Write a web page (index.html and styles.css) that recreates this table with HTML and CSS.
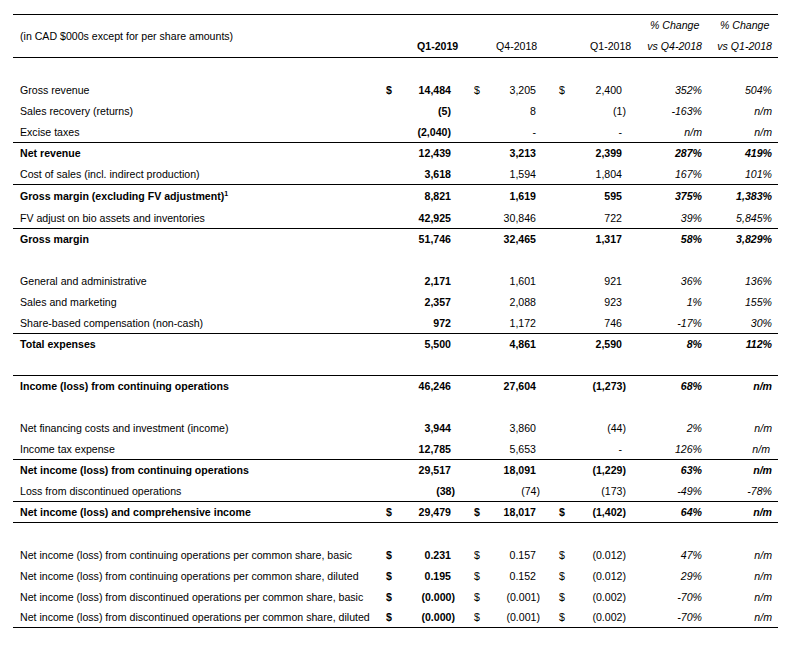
FILE: index.html
```html
<!DOCTYPE html>
<html>
<head>
<meta charset="utf-8">
<link rel="stylesheet" href="styles.css">
</head>
<body>
<div class="sheet">
  <div class="head">
    <div class="h-label">(in CAD $000s except for per share amounts)</div>
    <div class="h-q b">Q1-2019</div>
    <div class="h-q">Q4-2018</div>
    <div class="h-q">Q1-2018</div>
    <div class="h-p p1"><span>% Change<br>vs Q4-2018</span></div>
    <div class="h-p p2"><span>% Change<br>vs Q1-2018</span></div>
  </div>

  <div class="row"></div>
  <div class="row"><div class="lbl">Gross revenue</div><div class="d b">$</div><div class="v b">14,484</div><div class="d">$</div><div class="v">3,205</div><div class="d">$</div><div class="v">2,400</div><div class="p">352%</div><div class="p">504%</div></div>
  <div class="row"><div class="lbl">Sales recovery (returns)</div><div class="d"></div><div class="v b">(5)</div><div class="d"></div><div class="v">8</div><div class="d"></div><div class="v neg">(1)</div><div class="p">-163%</div><div class="p">n/m</div></div>
  <div class="row"><div class="lbl">Excise taxes</div><div class="d"></div><div class="v b">(2,040)</div><div class="d"></div><div class="v">-</div><div class="d"></div><div class="v">-</div><div class="p">n/m</div><div class="p">n/m</div></div>
  <div class="row total rule"><div class="lbl">Net revenue</div><div class="d"></div><div class="v">12,439</div><div class="d"></div><div class="v">3,213</div><div class="d"></div><div class="v">2,399</div><div class="p">287%</div><div class="p">419%</div></div>
  <div class="row"><div class="lbl">Cost of sales (incl. indirect production)</div><div class="d"></div><div class="v b">3,618</div><div class="d"></div><div class="v">1,594</div><div class="d"></div><div class="v">1,804</div><div class="p">167%</div><div class="p">101%</div></div>
  <div class="row total rule tall"><div class="lbl">Gross margin (excluding FV adjustment)<sup>1</sup></div><div class="d"></div><div class="v">8,821</div><div class="d"></div><div class="v">1,619</div><div class="d"></div><div class="v">595</div><div class="p">375%</div><div class="p">1,383%</div></div>
  <div class="row"><div class="lbl">FV adjust on bio assets and inventories</div><div class="d"></div><div class="v b">42,925</div><div class="d"></div><div class="v">30,846</div><div class="d"></div><div class="v">722</div><div class="p">39%</div><div class="p">5,845%</div></div>
  <div class="row total rule"><div class="lbl">Gross margin</div><div class="d"></div><div class="v">51,746</div><div class="d"></div><div class="v">32,465</div><div class="d"></div><div class="v">1,317</div><div class="p">58%</div><div class="p">3,829%</div></div>

  <div class="row"></div>
  <div class="row"><div class="lbl">General and administrative</div><div class="d"></div><div class="v b">2,171</div><div class="d"></div><div class="v">1,601</div><div class="d"></div><div class="v">921</div><div class="p">36%</div><div class="p">136%</div></div>
  <div class="row"><div class="lbl">Sales and marketing</div><div class="d"></div><div class="v b">2,357</div><div class="d"></div><div class="v">2,088</div><div class="d"></div><div class="v">923</div><div class="p">1%</div><div class="p">155%</div></div>
  <div class="row"><div class="lbl">Share-based compensation (non-cash)</div><div class="d"></div><div class="v b">972</div><div class="d"></div><div class="v">1,172</div><div class="d"></div><div class="v">746</div><div class="p">-17%</div><div class="p">30%</div></div>
  <div class="row total rule"><div class="lbl">Total expenses</div><div class="d"></div><div class="v">5,500</div><div class="d"></div><div class="v">4,861</div><div class="d"></div><div class="v">2,590</div><div class="p">8%</div><div class="p">112%</div></div>

  <div class="row"></div>
  <div class="row total rule"><div class="lbl">Income (loss) from continuing operations</div><div class="d"></div><div class="v">46,246</div><div class="d"></div><div class="v">27,604</div><div class="d"></div><div class="v neg">(1,273)</div><div class="p">68%</div><div class="p">n/m</div></div>

  <div class="row"></div>
  <div class="row"><div class="lbl">Net financing costs and investment (income)</div><div class="d"></div><div class="v b">3,944</div><div class="d"></div><div class="v">3,860</div><div class="d"></div><div class="v neg">(44)</div><div class="p">2%</div><div class="p">n/m</div></div>
  <div class="row"><div class="lbl">Income tax expense</div><div class="d"></div><div class="v b">12,785</div><div class="d"></div><div class="v">5,653</div><div class="d"></div><div class="v">-</div><div class="p">126%</div><div class="p inset">n/m</div></div>
  <div class="row total rule"><div class="lbl">Net income (loss) from continuing operations</div><div class="d"></div><div class="v">29,517</div><div class="d"></div><div class="v">18,091</div><div class="d"></div><div class="v neg">(1,229)</div><div class="p">63%</div><div class="p">n/m</div></div>
  <div class="row"><div class="lbl">Loss from discontinued operations</div><div class="d"></div><div class="v b neg">(38)</div><div class="d"></div><div class="v neg">(74)</div><div class="d"></div><div class="v neg">(173)</div><div class="p">-49%</div><div class="p">-78%</div></div>
  <div class="row total rule end boxed"><div class="lbl">Net income (loss) and comprehensive income</div><div class="d">$</div><div class="v">29,479</div><div class="d">$</div><div class="v">18,017</div><div class="d">$</div><div class="v neg">(1,402)</div><div class="p">64%</div><div class="p">n/m</div></div>

  <div class="row"></div>
  <div class="row"><div class="lbl">Net income (loss) from continuing operations per common share, basic</div><div class="d b">$</div><div class="v b">0.231</div><div class="d">$</div><div class="v">0.157</div><div class="d">$</div><div class="v neg">(0.012)</div><div class="p">47%</div><div class="p">n/m</div></div>
  <div class="row"><div class="lbl">Net income (loss) from continuing operations per common share, diluted</div><div class="d b">$</div><div class="v b">0.195</div><div class="d">$</div><div class="v">0.152</div><div class="d">$</div><div class="v neg">(0.012)</div><div class="p">29%</div><div class="p">n/m</div></div>
  <div class="row"><div class="lbl">Net income (loss) from discontinued operations per common share, basic</div><div class="d b">$</div><div class="v b neg">(0.000)</div><div class="d">$</div><div class="v neg">(0.001)</div><div class="d">$</div><div class="v neg">(0.002)</div><div class="p">-70%</div><div class="p">n/m</div></div>
  <div class="row end"><div class="lbl">Net income (loss) from discontinued operations per common share, diluted</div><div class="d b">$</div><div class="v b neg">(0.000)</div><div class="d">$</div><div class="v neg">(0.001)</div><div class="d">$</div><div class="v neg">(0.002)</div><div class="p">-70%</div><div class="p">n/m</div></div>
</div>
</body>
</html>
```

FILE: styles.css
```css
html, body {
  margin: 0;
  padding: 0;
  background: #ffffff;
}

body {
  font-family: "Liberation Sans", Arial, sans-serif;
  font-size: 10.6px;
  color: #000000;
}

.sheet {
  margin: 14px 0 0 13px;
  width: 765px;
}

.b {
  font-weight: bold;
}

/* header */
.head {
  box-sizing: border-box;
  height: 44px;
  border-top: 1px solid #000;
  border-bottom: 1px solid #000;
  display: grid;
  grid-template-columns: 404px 79px 94px 52px 75px 61px;
  grid-template-rows: 21px 21px;
  line-height: 21px;
}

.h-label {
  grid-row: 1 / 3;
  align-self: center;
  padding-left: 7px;
  white-space: nowrap;
}

.h-q {
  grid-row: 2;
  white-space: nowrap;
}

.h-p {
  grid-row: 1 / 3;
  font-style: italic;
  text-align: right;
  white-space: nowrap;
}

.h-p span {
  display: inline-block;
  text-align: center;
}

.h-p.p1 {
  padding-right: 15px;
}

.h-p.p2 {
  padding-right: 6px;
}

/* body rows */
.row {
  box-sizing: border-box;
  height: 21px;
  display: grid;
  grid-template-columns: 370px 9px 59px 29px 56px 29px 57px 80px 70px 6px;
  align-items: center;
  white-space: nowrap;
}

.row.rule {
  border-top: 1px solid #000;
}

.row.end {
  border-bottom: 1px solid #000;
}

.row.tall {
  height: 23px;
}

.row.boxed {
  height: 22px;
}

.row.total {
  font-weight: bold;
}

.lbl {
  padding-left: 7px;
}

.lbl sup {
  font-size: 7px;
  line-height: 0;
  vertical-align: 4px;
}

.d {
  text-align: right;
}

.v {
  text-align: right;
}

.v.neg {
  margin-right: -4px;
}

.p {
  text-align: right;
  font-style: italic;
}

.p.inset {
  margin-right: 2px;
}
```
